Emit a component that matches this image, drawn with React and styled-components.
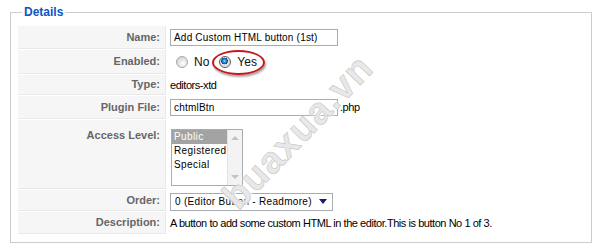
import styled, { createGlobalStyle } from "styled-components";

const GlobalStyle = createGlobalStyle`
  html, body {
    margin: 0;
    padding: 0;
    background: #fff;
  }
  body {
    font-family: "Liberation Sans", Arial, sans-serif;
    font-size: 11px;
    color: #000;
  }
`;

function App() {
  return (
    <Page>
      <GlobalStyle />
      <Fieldset>
        <Legend>Details</Legend>
        <FormGrid>
          <Key>Name:</Key>
          <Value>
            <TextInput readOnly value="Add Custom HTML button (1st)" />
          </Value>

          <Key>Enabled:</Key>
          <Value>
            <RadioGroup>
              <RadioOption>
                <RadioDot />
                No
              </RadioOption>
              <Circled>
                <RadioOption>
                  <RadioDot $checked />
                  Yes
                </RadioOption>
              </Circled>
            </RadioGroup>
          </Value>

          <Key>Type:</Key>
          <Value>editors-xtd</Value>

          <Key>Plugin File:</Key>
          <Value>
            <TextInput readOnly value="chtmlBtn" />
            <Suffix>.php</Suffix>
          </Value>

          <Key $top>Access Level:</Key>
          <Value $top>
            <ListBox>
              <ListItems>
                {["Public", "Registered", "Special"].map((item, index) => (
                  <ListItem key={item} $selected={index === 0}>
                    {item}
                  </ListItem>
                ))}
              </ListItems>
              <Scrollbar>
                <ScrollArrow $up />
                <ScrollArrow />
              </Scrollbar>
            </ListBox>
          </Value>

          <Key>Order:</Key>
          <Value>
            <SelectBox>
              <span>0 (Editor Button - Readmore)</span>
              <SelectArrow />
            </SelectBox>
          </Value>

          <Key>Description:</Key>
          <Value>
            A button to add some custom HTML in the editor.This is button No 1
            of 3.
          </Value>
        </FormGrid>
      </Fieldset>
      <Watermark>buaxua.vn</Watermark>
    </Page>
  );
}

const Page = styled.div`
  position: relative;
  width: 595px;
  height: 249px;
  overflow: hidden;
`;

const Fieldset = styled.fieldset`
  margin: 4px 3px 0 10px;
  padding: 6px 0 8px 7px;
  border: 1px solid #ccc;
  min-width: 0;
`;

const Legend = styled.legend`
  margin-left: 4px;
  padding: 0 2px;
  font-family: "Liberation Sans", Arial, sans-serif;
  font-size: 12px;
  line-height: 16px;
  font-weight: bold;
  color: #0b55c4;
`;

const FormGrid = styled.div`
  display: grid;
  grid-template-columns: 148px 1fr;
  grid-template-rows: 23px 24px 20px 23px 69px 21px 22px;
  column-gap: 4px;
  row-gap: 1px;
`;

const Key = styled.div`
  display: flex;
  align-items: ${({ $top }) => ($top ? "flex-start" : "center")};
  justify-content: flex-end;
  padding: ${({ $top }) => ($top ? "9px 5px 0 0" : "0 5px 0 0")};
  background: #f6f6f6;
  border-right: 1px solid #e9e9e9;
  border-bottom: 1px solid #e9e9e9;
  color: #666;
  font-weight: bold;
  font-size: 11px;
  line-height: 13px;
`;

const Value = styled.div`
  display: flex;
  align-items: ${({ $top }) => ($top ? "flex-start" : "center")};
  padding-top: ${({ $top }) => ($top ? "9px" : "0")};
  font-size: 11px;
  line-height: 13px;
  letter-spacing: -0.45px;
  white-space: nowrap;
`;

const TextInput = styled.input`
  box-sizing: border-box;
  width: 168px;
  height: 17px;
  margin: 0;
  padding: 0 3px;
  border: 1px solid #a5acb2;
  background: #fff;
  font-family: "Liberation Sans", Arial, sans-serif;
  font-size: 10px;
  letter-spacing: 0.2px;
  color: #000;
  outline: none;
`;

const Suffix = styled.span`
  margin-left: 2px;
`;

const RadioGroup = styled.div`
  display: flex;
  align-items: center;
  gap: 10px;
  padding-left: 6px;
`;

const RadioOption = styled.span`
  display: inline-flex;
  align-items: center;
  gap: 6px;
  font-size: 12px;
  letter-spacing: 0;
  color: #111;
`;

const RadioDot = styled.span`
  box-sizing: border-box;
  width: 12px;
  height: 12px;
  border-radius: 50%;
  border: 1px solid ${({ $checked }) => ($checked ? "#5c5c5c" : "#a8a8a8")};
  background: ${({ $checked }) =>
    $checked
      ? "radial-gradient(circle at 45% 40%, #9fd6ff 0, #1f78c8 2px, #0b4f8f 3.2px, #e9e9e9 3.6px, #d8d8d8 5px, #f6f6f6 6px)"
      : "radial-gradient(circle at 60% 65%, #ffffff 0, #f2f2f2 2px, #d9d9d9 6px)"};
`;

const Circled = styled.span`
  position: relative;
  display: inline-flex;

  &::after {
    content: "";
    position: absolute;
    left: -7px;
    right: -8px;
    top: -6px;
    bottom: -6px;
    border: 2px solid #c8161d;
    border-radius: 50%;
    box-shadow: 1px 2px 2px rgba(0, 0, 0, 0.35);
    pointer-events: none;
  }
`;

const ListBox = styled.div`
  display: flex;
  box-sizing: border-box;
  width: 72px;
  height: 57px;
  margin-left: 1px;
  border: 1px solid #a5acb2;
  background: #fff;
`;

const ListItems = styled.div`
  flex: 1;
  display: flex;
  flex-direction: column;
`;

const ListItem = styled.div`
  padding-left: 2px;
  font-size: 10px;
  line-height: 14px;
  letter-spacing: 0.4px;
  color: ${({ $selected }) => ($selected ? "#fff" : "#000")};
  background: ${({ $selected }) => ($selected ? "#a3a3a3" : "transparent")};
`;

const Scrollbar = styled.div`
  width: 14px;
  display: flex;
  flex-direction: column;
  justify-content: space-between;
  align-items: center;
  padding: 6px 0;
  background: #f3f3f3;
  border-left: 1px solid #e2e2e2;
`;

const ScrollArrow = styled.span`
  width: 0;
  height: 0;
  border-left: 4px solid transparent;
  border-right: 4px solid transparent;
  ${({ $up }) =>
    $up ? "border-bottom: 4px solid #c4c4c4;" : "border-top: 4px solid #c4c4c4;"}
`;

const SelectBox = styled.div`
  box-sizing: border-box;
  display: flex;
  align-items: center;
  justify-content: space-between;
  width: 163px;
  height: 18px;
  margin-top: 2px;
  padding: 0 5px 0 4px;
  border: 1px solid #a5acb2;
  background: #fff;
  font-size: 10px;
  letter-spacing: 0.3px;
`;

const SelectArrow = styled.span`
  width: 0;
  height: 0;
  border-left: 4px solid transparent;
  border-right: 4px solid transparent;
  border-top: 5px solid #1c1c6e;
`;

const Watermark = styled.span`
  position: absolute;
  left: 298px;
  top: 132px;
  transform: translate(-50%, -50%) rotate(-46deg);
  font-family: "Liberation Sans", Arial, sans-serif;
  font-size: 38px;
  font-weight: bold;
  letter-spacing: 1px;
  color: rgba(222, 222, 222, 0.7);
  -webkit-text-stroke: 0.6px rgba(165, 165, 165, 0.6);
  text-shadow: 0 0 2px #fff, 1px 1px 2px rgba(255, 255, 255, 0.9);
  white-space: nowrap;
  pointer-events: none;
`;

export default App;
